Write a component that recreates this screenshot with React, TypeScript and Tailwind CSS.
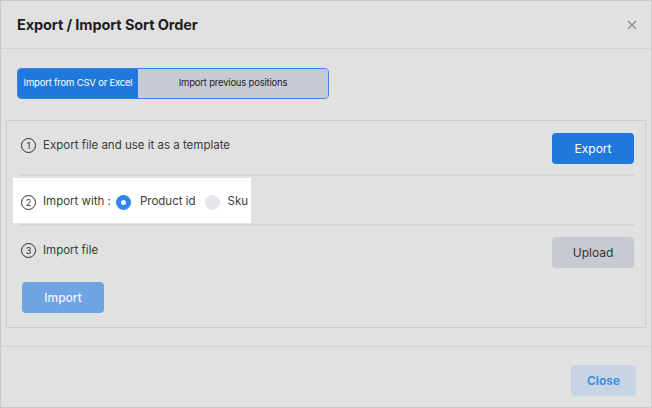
import React from "react";

function StepNumber({ n }: { n: number }) {
  return (
    <span className="flex h-[15px] w-[15px] shrink-0 items-center justify-center rounded-full border-[1.5px] border-[#2e2e2e] text-[9px] leading-none text-[#2e2e2e]">
      {n}
    </span>
  );
}

function Radio({ checked }: { checked: boolean }) {
  return checked ? (
    <span className="flex h-[15px] w-[15px] shrink-0 items-center justify-center rounded-full bg-[#2f86ef]">
      <span className="h-[5px] w-[5px] rounded-full bg-white" />
    </span>
  ) : (
    <span className="h-[15px] w-[15px] shrink-0 rounded-full bg-[#e5e6ec]" />
  );
}

export default function App() {
  return (
    <div
      className="flex h-[408px] w-[652px] flex-col whitespace-nowrap border border-[#c8c8c8] bg-[#e1e1e1] text-[#3b3b3b]"
      style={{ fontFamily: "Inter, 'Noto Sans', sans-serif" }}
    >
      {/* Header */}
      <div className="flex h-[48px] shrink-0 items-center justify-between border-b border-[#cfd1d8] pl-4 pr-[14px]">
        <h1 className="text-[14.5px] font-bold tracking-[-0.1px] text-[#1e1e1e]">Export / Import Sort Order</h1>
        <svg width="10" height="10" viewBox="0 0 10 10" className="text-[#8a8a8a]">
          <path d="M1 1 L9 9 M9 1 L1 9" stroke="currentColor" strokeWidth="1.3" />
        </svg>
      </div>

      {/* Body */}
      <div className="flex flex-col px-[5px] pt-[19px] pb-[18px]">
        <div className="ml-[11px] flex h-[31px] w-[312px] overflow-hidden rounded-[4px] border border-[#3b86e2] text-[9.5px] tracking-[-0.2px]">
          <button className="flex w-[120px] items-center justify-center bg-[#1f78db] text-white">Import from CSV or Excel</button>
          <button className="flex flex-1 items-center justify-center bg-[#c8cad3] text-[#222]">Import previous positions</button>
        </div>

        <div className="mt-[21px] flex h-[208px] flex-col border border-[#cbcdd4] text-[11.5px]">
          {/* Step 1 */}
          <div className="ml-3 mr-[11px] flex h-[55px] shrink-0 items-start justify-between border-b-2 border-[#d3d4d8] pt-[12px]">
            <div className="ml-[2px] mt-[4px] flex items-center gap-[7px]">
              <StepNumber n={1} />
              <span>Export file and use it as a template</span>
            </div>
            <button className="flex h-[31px] w-[82px] items-center justify-center rounded-[4px] bg-[#1f78dc] text-[12px] text-white">
              Export
            </button>
          </div>

          {/* Step 2 */}
          <div className="ml-3 mr-[11px] flex h-[50px] shrink-0 items-center border-b-2 border-[#d3d4d8]">
            <div className="-ml-[6px] flex h-[45px] w-[238px] items-center bg-white pl-[8px] pt-[4px]">
              <div className="flex items-center gap-[7px]">
                <StepNumber n={2} />
                <span>Import with :</span>
              </div>
              <div className="ml-[5px] flex items-center gap-[9px]">
                <Radio checked />
                <span>Product id</span>
              </div>
              <div className="ml-[9px] flex items-center gap-[8px]">
                <Radio checked={false} />
                <span>Sku</span>
              </div>
            </div>
          </div>

          {/* Step 3 */}
          <div className="ml-3 mr-[11px] flex flex-col pt-[11px]">
            <div className="flex items-start justify-between">
              <div className="ml-[2px] mt-[5px] flex items-center gap-[7px]">
                <StepNumber n={3} />
                <span>Import file</span>
              </div>
              <button className="flex h-[31px] w-[82px] items-center justify-center rounded-[4px] bg-[#c8cad3] text-[12px] text-[#333]">
                Upload
              </button>
            </div>
            <button className="ml-[3px] mt-[14px] flex h-[31px] w-[82px] items-center justify-center rounded-[4px] bg-[#6ea4e2] text-[12px] font-medium text-[#eef4fc]">
              Import
            </button>
          </div>
        </div>
      </div>

      {/* Footer */}
      <div className="flex flex-1 items-start justify-end border-t border-[#cfd1d8] pr-[15px] pt-[18px]">
        <button className="flex h-[31px] w-[65px] items-center justify-center rounded-[4px] bg-[#c6d4e4] text-[12px] font-semibold text-[#3a8be3]">
          Close
        </button>
      </div>
    </div>
  );
}
